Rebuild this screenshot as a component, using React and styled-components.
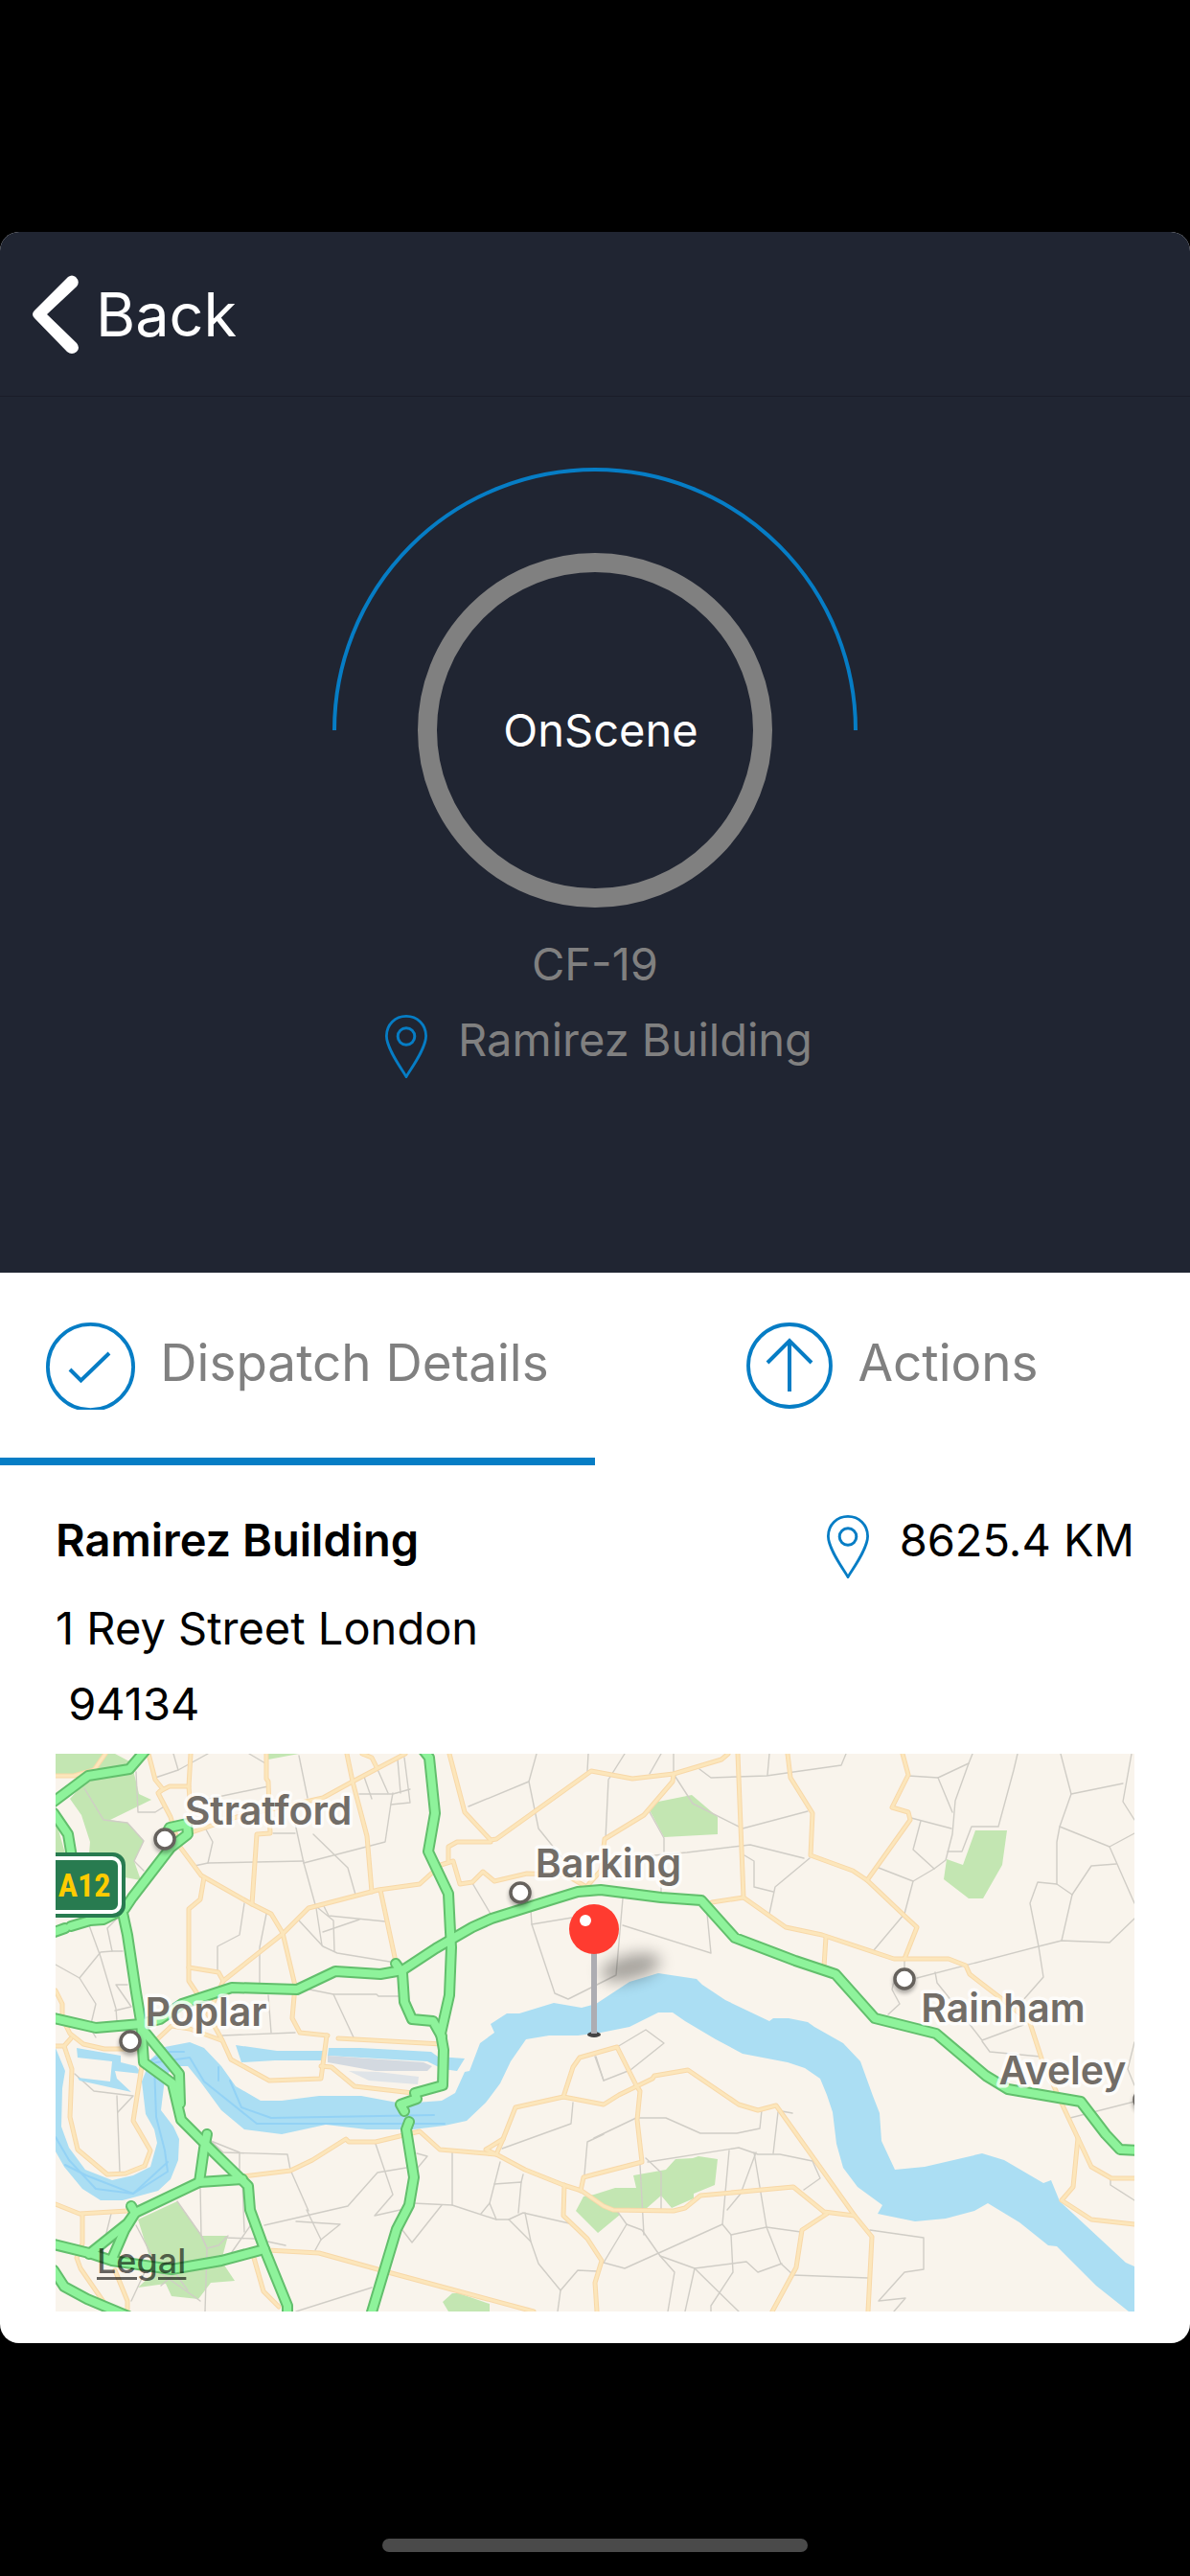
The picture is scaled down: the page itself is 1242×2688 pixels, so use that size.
import React from 'react';
import styled, {createGlobalStyle} from 'styled-components';

const GlobalStyle = createGlobalStyle`
  body {
    margin: 0;
    background: #000;
    font-family: Inter, 'Liberation Sans', sans-serif;
  }
`;

const Screen = styled.div`
  min-height: 100vh;
  box-sizing: border-box;
  padding: 242px 0 25px;
  display: flex;
  flex-direction: column;
  background: #000;
`;

const Sheet = styled.main`
  background: #fff;
  border-radius: 20px;
  overflow: hidden;
`;

const Header = styled.header`
  display: flex;
  align-items: center;
  height: 171px;
  padding: 0 34px;
  background: #202532;
  border-bottom: 1px solid #1a1d29;
`;

const BackButton = styled.button`
  display: flex;
  align-items: center;
  gap: 18px;
  padding: 0;
  border: 0;
  background: none;
  color: #fff;
  font: inherit;
  font-size: 63px;
  line-height: 80px;
`;

const Status = styled.section`
  display: flex;
  flex-direction: column;
  align-items: center;
  padding: 74px 0 203px;
  background: #202532;
  color: #808080;
`;

const Dial = styled.div`
  display: grid;
  justify-items: center;
  margin-bottom: 29px;

  > * {
    grid-area: 1 / 1;
  }
`;

const Ring = styled.div`
  display: flex;
  align-items: center;
  justify-content: center;
  box-sizing: border-box;
  width: 370px;
  height: 370px;
  margin-top: 89px;
  padding-left: 12px;
  border: 20px solid #808080;
  border-radius: 50%;
  color: #fff;
`;

const Text = styled.span`
  font-size: 47px;
  line-height: 60px;
`;

const PinRow = styled.div`
  display: flex;
  align-items: flex-start;
  gap: 32px;
`;

const StatusPlace = styled(PinRow)`
  margin-top: 19px;
  padding-left: 8px;
`;

const Tabs = styled.nav`
  display: grid;
  grid-template-columns: 1fr 1fr;
`;

const Tab = styled.button`
  display: flex;
  align-items: flex-start;
  justify-content: center;
  gap: 26px;
  padding: 52px 0 50px;
  border: 0;
  border-bottom: 8px solid ${props => props.$active ? '#067dc5' : 'transparent'};
  background: none;
  color: #808080;
  font: inherit;
  font-size: 53px;
  line-height: 84px;
`;

const Details = styled.section`
  display: flex;
  flex-direction: column;
  padding: 48px 58px 33px;
  color: #000;
`;

const TitleRow = styled.div`
  display: flex;
  justify-content: space-between;
  align-items: flex-start;
  margin-bottom: 22px;
`;

const Title = styled.h1`
  margin: 0;
  font-size: 47px;
  font-weight: 600;
  line-height: 60px;
`;

const Address = styled.address`
  display: flex;
  flex-direction: column;
  gap: 19px;
  margin-bottom: 22px;
  font-style: normal;
  white-space: pre;
`;

const MapBox = styled.div`
  position: relative;
  overflow: hidden;

  svg {
    display: block;
    width: 100%;
    height: auto;
  }
`;

// sits over the map, bottom left
const LegalLink = styled.a`
  position: absolute;
  left: 43px;
  bottom: 32px;
  color: rgba(0, 0, 0, 0.6);
  font-size: 36px;
  font-weight: 500;
  line-height: 42px;
  text-decoration: underline;
  text-decoration-thickness: 3px;
  text-underline-offset: 4px;
`;

const HomeBar = styled.div`
  align-self: center;
  width: 444px;
  height: 14px;
  margin-top: auto;
  border-radius: 7px;
  background: #4a4a4a;
`;

const Chevron = () => (
  <svg width="48" height="82" viewBox="0 0 48 82" fill="#fff" aria-hidden="true">
    <path d="M37 2Q41 -1 45 2Q50 7 46 12L15 41L46 71Q50 76 46 80Q41 84 36 80L2 45Q-2 41 2 37Z" />
  </svg>
);

const Pin = () => (
  <svg width="44" height="70" viewBox="0 0 44 70" fill="none" stroke="#067dc5" strokeWidth="2.8" aria-hidden="true">
    <path d="M22 68.500C17 60 1.400 39 1.400 26C1.400 14 10.500 5.400 22 5.400S42.600 14 42.600 26C42.600 39 27 60 22 68.500Z" />
    <circle cx="22" cy="26.500" r="8.800" strokeWidth="3" />
  </svg>
);

const CheckIcon = () => (
  <svg width="93" height="91" viewBox="0 0 93 91" fill="none" stroke="#067dc5" strokeWidth="3.800" aria-hidden="true">
    <circle cx="46.500" cy="46.500" r="44.600" />
    <path d="M25 49L36.500 60.500L66 32" strokeWidth="4" />
  </svg>
);

const ArrowIcon = () => (
  <svg width="90" height="90" viewBox="0 0 90 90" fill="none" stroke="#067dc5" strokeWidth="3.800" aria-hidden="true">
    <circle cx="45" cy="45" r="43" />
    <path d="M45 19V72M22 42L45 19L68 42" strokeWidth="4" />
  </svg>
);

const Arc = () => (
  <svg width="548" height="274" viewBox="0 0 548 274" fill="none" aria-hidden="true">
    <path d="M2 274A272 272 0 0 1 546 274" stroke="#067dc5" strokeWidth="4" />
  </svg>
);

const river = '0,307 10,331 7,349 6,389 14,411 31,434 59,445 81,440 99,431 106,406 103,392 94,376 90,342 99,319 114,306 140,301 155,307 173,326 188,347 214,362 236,362 275,357 319,357 362,365 403,362 417,354 427,332 432,331 443,302 458,291 454,282 471,271 484,271 520,260 549,265 564,261 599,238 629,229 669,235 675,241 699,257 745,279 749,276 765,276 785,280 792,285 822,302 840,321 853,357 860,375 862,404 876,434 907,431 967,417 990,424 1031,448 1039,445 1048,467 1117,531 1126,535 1126,582 1120,582 1086,555 1045,514 1036,513 1006,489 973,469 959,477 929,485 897,488 858,480 863,471 837,452 822,432 815,407 811,374 805,356 798,339 782,328 764,322 717,313 689,298 657,279 644,270 629,270 599,285 569,291 545,294 515,294 491,298 475,321 464,344 449,364 429,383 406,388 373,392 325,392 282,387 236,397 197,392 173,372 151,342 138,326 123,326 114,339 110,372 123,389 129,402 128,424 120,444 107,456 70,466 47,466 28,454 9,431 0,415';

const docks = [
  '188,304 231,310 281,310 281,320 229,320 194,322',
  '285,307 318,307 392,311 399,316 427,318 419,331 404,329 388,321 336,318 284,315',
  '22,307 68,315 68,322 84,326 90,334 62,331 64,339 79,353 25,341 23,338 57,342 59,321 23,317',
];

const parks = [
  '0,0 62,0 79,9 84,29 87,42 100,48 57,69 75,72 92,91 82,112 89,132 72,129 35,104 36,92 27,64 15,47 35,25 0,22',
  '0,69 10,104 0,104',
  '222,0 254,0 222,6',
  '620,59 629,50 664,43 691,66 691,84 635,87',
  '960,80 993,80 988,116 968,151 953,151 927,131 930,110 947,116',
  '86,486 127,467 153,503 180,503 173,529 187,550 162,552 149,569 121,566 115,553 86,557 103,541',
  '404,572 414,563 421,563 453,574 453,582 410,582',
  '543,477 551,462 562,460 584,453 606,453 603,440 637,434 647,423 665,422 671,420 691,423 688,450 666,459 666,464 643,474 632,461 616,475 586,476 589,481 566,500',
];

const channels = [
  '170,327 170,341',
  '182,341 194,369 225,380 395,377',
  '134,311 119,311 92,324',
  '92,324 140,317 155,342 210,386 406,386',
  '103,324 105,379 114,414 117,436 81,459 32,440 10,429',
  '0,400 14,424 42,454 81,459 117,426',
];

const lanes = [
  '123,0 128,17 104,25', '128,17 159,0', '202,0 219,10', '254,2 263,46', '247,59 259,114 272,161 278,200',
  '269,84 305,119 313,147', '145,117 159,114 259,112', '259,114 344,92 350,52 352,41', '157,79 164,92 159,114',
  '227,83 250,83', '160,47 222,34', '84,19 86,61 104,61 115,54', '197,156 192,189 169,201 169,227',
  '220,167 213,202 213,239', '280,159 285,169 344,175', '254,174 279,201 294,208 355,218', '274,161 290,174 291,206',
  '279,186 317,173', '357,6 360,41', '364,4 370,51 350,53', '317,42 352,42 370,37', '322,24 330,47', '335,14 347,41',
  '35,179 47,212 63,266 64,279', '67,169 54,182 59,206 70,206', '0,220 25,234 42,261 36,286 42,296', '25,234 47,207 59,206',
  '75,241 63,241 79,264 62,268', '265,246 290,251 335,251 337,253 364,253', '290,251 311,296', '222,252 225,291',
  '174,294 250,291', '30,36 50,69 75,72 92,91 82,112 92,122', '502,0 494,29 504,78 529,109', '494,29 431,55',
  '556,0 555,18', '594,0 577,27 574,89', '632,0 620,21', '645,0 645,21 665,52 717,78 785,60',
  '672,16 684,25 742,23 820,12 825,0', '745,0 743,22', '620,61 635,88 635,102', '602,108 659,103 725,95 781,109',
  '632,130 632,144', '719,106 729,112 729,139 749,144', '787,109 751,139 745,167', '435,135 454,167',
  '496,164 497,178 521,250 535,256 585,231 592,151', '497,178 539,171', '592,179 684,208 680,167',
  '890,23 921,25 953,10 957,0', '953,10 939,49 936,84 929,111 917,120 895,133 886,167 854,205', '921,25 936,61',
  '893,67 935,78', '903,70 895,100 917,120', '859,119 895,133', '1004,0 1000,17 984,76 956,76 946,102 931,102',
  '1049,0 1060,42 1048,76 1045,92 1045,136 1025,134 1017,156 1026,201 1031,233 1002,266', '1060,42 1114,31',
  '1123,0 1114,50 1126,69', '1048,76 1100,97 1126,83', '1100,97 1126,156', '1045,136 1061,147 1081,117 1107,115',
  '1061,147 1050,195', '899,234 1026,201 1050,195 1100,197 1126,172', '886,216 886,228', '875,237 873,246 881,261 869,272',
  '918,228 920,239 932,254 967,299 1010,283', '967,300 975,311 1028,316', '1126,301 1119,329 1126,346',
  '1059,380 1126,363', '1101,444 1101,450 1126,466', '586,306 616,288 635,302 600,330 572,341 563,316',
  '562,401 606,380 637,380 673,396 711,396 735,391 737,372', '758,373 769,375', '754,374 749,417',
  '618,426 713,411 733,418 756,418 790,425 798,443 781,455', '703,414 696,491 705,502 707,541 684,576 684,582',
  '729,416 742,494 757,532 770,544', '731,416 715,459 701,476', '705,502 742,494 778,499', '696,491 594,537 572,531',
  '586,477 596,491 572,531', '596,491 612,497 631,524 646,541 639,582', '631,524 667,537 721,530 733,541 758,532',
  '667,537 657,582', '667,537 713,582', '616,422 632,437 632,475', '610,429 614,502', '770,544 848,547',
  '850,497 906,505 906,538 886,541 859,571 887,568 875,582', '20,334 40,352 81,357 65,374', '64,357 67,436',
  '162,404 175,416 242,418 245,434 264,477', '162,404 192,416 192,439', '151,451 152,503 158,516 156,582',
  '218,492 305,472 336,437 366,432', '334,407 352,460 333,482 373,473', '414,416 414,471 373,469',
  '403,471 372,510 362,497', '414,471 460,486 473,486 488,479 536,490', '466,412 538,386 540,364',
  '464,426 453,469 460,486', '444,480 453,469', '458,449 486,447 483,479', '488,439 486,447',
  '490,479 496,509 504,532 527,560 524,582', '527,560 545,539 565,540', '473,486 496,509', '572,397 555,405 552,439',
  '251,488 297,491 277,507 271,518', '277,507 262,476', '251,582 330,557', '84,492 110,542 151,571', '127,467 153,504 158,516 170,513 180,503',
  '177,505 207,506 240,513', '195,446 197,499', '205,490 184,520', '564,316 572,341', '58,480 53,500', '377,417 388,420 378,432',
  '79,571 93,541', '110,555 125,542 138,560',
];

const roads = [
  '0,23 19,23 40,17 52,0', '97,0 104,27 112,37 107,41 120,66 129,96 152,127 205,157 225,167 237,187 250,242 247,276 255,291 284,294',
  '141,0 139,34 119,34 109,39', '139,34 141,60', '142,82 189,66 279,46 310,29 365,0', '220,0 220,26 222,29 224,83 210,84 205,157',
  '304,0 310,29 325,86 330,144', '320,0 330,4 335,14', '175,237 237,188 264,161 337,142 380,136 402,116 415,112 422,136 435,134 446,123 458,133 492,125 532,126 554,139 569,122 573,89 614,64 644,29 645,21',
  '339,142 355,217', '155,129 151,152 139,162 139,237 149,252', '139,223 170,228 175,237 165,259 159,272 174,299 183,319 223,341 277,339 283,294',
  '277,326 288,327 312,347 373,354', '295,297 403,303', '173,299 140,287 121,284 104,300',
  '0,247 7,261 7,276 15,292 29,303 51,308 90,308', '0,305 9,305 16,297', '9,305 17,329 15,379 23,413 54,439 73,438 93,430 99,414 81,383 90,326',
  '0,470 25,480 75,477', '28,481 28,511 22,526 26,537 57,582', '62,539 75,571 75,582',
  '188,442 245,435 268,424 303,402 306,405 334,405 380,394 401,413 460,418 490,434 530,450 549,456 572,472 582,476 645,477 657,474 673,461 770,452 802,478 834,482',
  '460,418 467,402 480,369 530,358 572,366 588,356 623,339 625,336 660,330 713,366 733,372 752,367 834,482 852,504 848,582',
  '460,418 449,413 467,402', '530,358 540,327 547,317 586,306 606,346 610,352 607,382 612,426 562,439 551,442 548,456',
  '531,450 530,482 555,506 570,529 563,552 565,582', '221,518 275,521 347,541 499,582', '207,526 217,561 233,577',
  '805,480 779,497 773,536 748,582', '764,0 767,25 790,62 788,106 832,122 847,132 886,169 899,181 886,214',
  '884,0 890,22 873,56 890,61 892,69 847,132', '804,191 802,222', '411,0 427,61 454,90 460,89 559,18 602,26 645,21 695,6 702,0',
  '454,92 419,92 410,97 410,112', '712,0 718,150 762,181 800,189 875,214 932,214 950,221 954,230 989,257 1010,274 1017,281 1030,321 1052,369 1067,401 1062,452 1050,466 1081,486 1126,491',
  '718,150 685,155', '1067,401 1081,431 1102,443 1126,443',
];

const motorways = [
  '-2,50 34,23 77,16 95,-5', '-2,62 13,84 17,108', '112,90 119,77 137,73 138,84 120,98 80,150 72,162 50,173 36,174 16,180',
  '10,182 -4,187', '70,166 75,189 84,249 89,279 92,322 122,344 131,382 158,409 201,451 203,476 218,517 242,576 242,588',
  '89,279 92,289 129,334 130,365', '158,397 155,412 150,447', '195,444 150,447 83,479 75,490 35,522', '79,472 83,479 72,497 59,527',
  '-2,512 35,521 59,529 121,538 173,529 218,517', '-2,539 9,556 33,569 76,587',
  '-2,276 42,286 89,282 109,277 132,261 184,244 252,246 292,227 339,230 362,226 397,203 435,181 455,172 519,152 545,144 569,142 632,150 674,153 709,192 772,216 814,230 855,276 919,292 971,336 994,350 1070,363 1096,397 1111,413 1130,414',
  '382,-6 390,4 396,62 389,102 410,146 412,186 413,202 411,252 402,292 405,309 404,346 375,354 377,360 360,366 364,373',
  '369,384 366,392 374,442 369,471 356,496 329,586', '355,219 362,229 364,259 372,277 394,279 403,295',
];

const towns = [
  {name: 'Stratford', x: 222, y: 74, dot: [114, 89]},
  {name: 'Poplar', x: 157, y: 284, dot: [78, 300]},
  {name: 'Barking', x: 577, y: 129, dot: [485, 145]},
  {name: 'Rainham', x: 989, y: 280, dot: [886, 235]},
  {name: 'Aveley', x: 1051, y: 345, dot: [1136, 361]},
];

const Lines = ({items, color, width}) => (
  <g fill="none" stroke={color} strokeWidth={width} strokeLinejoin="round" strokeLinecap="round">
    {items.map(points => <polyline key={points} points={points} />)}
  </g>
);

const Areas = ({items, color}) => (
  <g fill={color}>
    {items.map(points => <polygon key={points} points={points} />)}
  </g>
);

const MapDrawing = () => (
  <svg viewBox="0 0 1126 582" role="img" aria-label="Map of East London">
    <defs>
      <filter id="shadow" x="-50%" y="-100%" width="200%" height="300%">
        <feGaussianBlur stdDeviation="8" />
      </filter>
      <filter id="dotShadow" x="-50%" y="-50%" width="200%" height="200%">
        <feGaussianBlur stdDeviation="2" />
      </filter>
    </defs>
    <rect width="1126" height="582" fill="#f9f4ec" />
    <Areas items={parks} color="#c3e6b2" />
    <Lines items={lanes} color="#d0cdc6" width="1.4" />
    <Areas items={[river, ...docks]} color="#abdef3" />
    <Lines items={channels} color="#93d2f5" width="2" />
    <polygon points="284,315 384,322 393,326 388,331 334,331 284,322" fill="#d3d9e0" />
    <polygon points="306,331 336,332 379,337 378,345 327,341" fill="#dfe4e8" />
    <Lines items={roads} color="#f8d8a8" width="5" />
    <Lines items={roads} color="#fce6bb" width="3" />
    <Lines items={motorways} color="#62bf6c" width="12" />
    <Lines items={motorways} color="#8ef39b" width="8" />

    {/* A12 road shield, cut by the map edge */}
    <rect x="-30" y="103" width="103" height="68" rx="13" fill="#287b50" />
    <rect x="-30" y="109" width="97" height="56" rx="8" fill="none" stroke="#fff" strokeWidth="4" />
    <text x="30" y="149" textAnchor="middle" fontFamily="'Liberation Sans Narrow', 'Roboto Condensed', Roboto, sans-serif" fontSize="34" fontWeight="700" fill="#ffcc00">A12</text>

    {towns.map(({name, dot}) => (
      <g key={name}>
        <circle cx={dot[0]} cy={dot[1] + 3} r="12" fill="#000" opacity="0.3" filter="url(#dotShadow)" />
        <circle cx={dot[0]} cy={dot[1]} r="10" fill="#fff" stroke="#66625d" strokeWidth="3.500" />
      </g>
    ))}
    <g fontFamily="Inter, sans-serif" fontSize="41" fontWeight="600" fill="#726d67" stroke="#fff" strokeOpacity="0.8" strokeWidth="7" strokeLinejoin="round" paintOrder="stroke" textAnchor="middle">
      {towns.map(({name, x, y}) => <text key={name} x={x} y={y}>{name}</text>)}
    </g>

    <ellipse cx="600" cy="223" rx="32" ry="13" transform="rotate(-14 600 223)" opacity="0.33" filter="url(#shadow)" />
    <ellipse cx="562" cy="293" rx="7" ry="3" fill="#444" />
    <path d="M562 205V292" stroke="#adadb2" strokeWidth="6" />
    <circle cx="562" cy="183" r="26" fill="#ff3b30" />
    <circle cx="553" cy="174" r="6" fill="#fff" />
  </svg>
);

class App extends React.Component {
  state = {tab: 'details'};

  render() {
    const {tab} = this.state;
    return (
      <>
        <GlobalStyle />
        <Screen>
          <Sheet>
            <Header>
              <BackButton type="button"><Chevron />Back</BackButton>
            </Header>
            <Status>
              <Dial>
                <Arc />
                <Ring><Text>OnScene</Text></Ring>
              </Dial>
              <Text>CF-19</Text>
              <StatusPlace>
                <Pin />
                <Text>Ramirez Building</Text>
              </StatusPlace>
            </Status>
            <Tabs>
              <Tab type="button" $active={tab === 'details'} onClick={() => this.setState({tab: 'details'})}>
                <CheckIcon />Dispatch Details
              </Tab>
              <Tab type="button" $active={tab === 'actions'} onClick={() => this.setState({tab: 'actions'})}>
                <ArrowIcon />Actions
              </Tab>
            </Tabs>
            <Details>
              <TitleRow>
                <Title>Ramirez Building</Title>
                <PinRow>
                  <Pin />
                  <Text>8625.4 KM</Text>
                </PinRow>
              </TitleRow>
              <Address>
                <Text>1 Rey Street London</Text>
                <Text>{' 94134'}</Text>
              </Address>
              <MapBox>
                <MapDrawing />
                <LegalLink href="#legal">Legal</LegalLink>
              </MapBox>
            </Details>
          </Sheet>
          <HomeBar />
        </Screen>
      </>
    );
  }
}

export default App;
